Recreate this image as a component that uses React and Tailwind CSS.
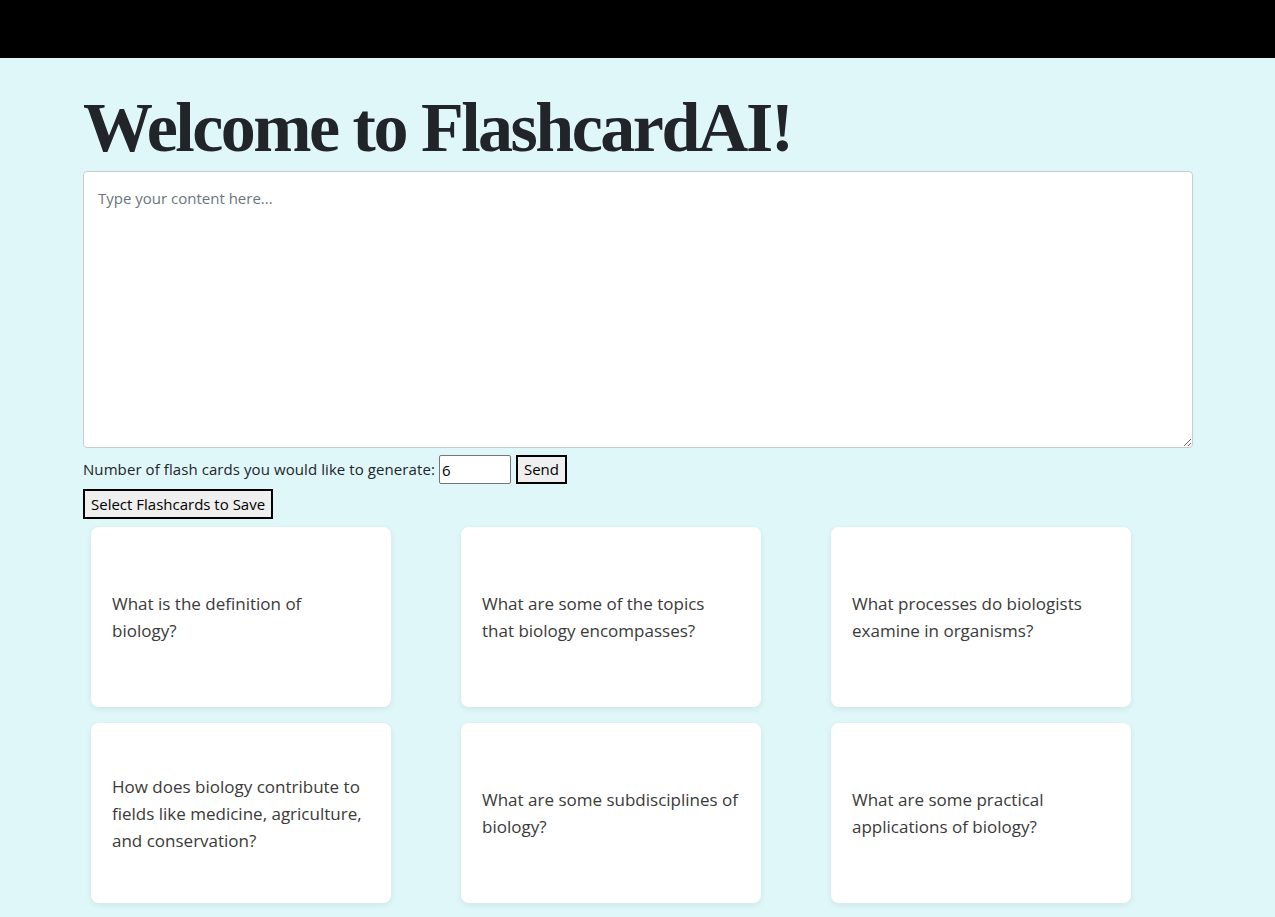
import React, { useState } from "react";

const cards = [
  ["What is the definition of", "biology?"],
  ["What are some of the topics", "that biology encompasses?"],
  ["What processes do biologists", "examine in organisms?"],
  ["How does biology contribute to", "fields like medicine, agriculture,", "and conservation?"],
  ["What are some subdisciplines of", "biology?"],
  ["What are some practical", "applications of biology?"],
];

export default function App() {
  const [count, setCount] = useState("6");
  const [text, setText] = useState("");

  return (
    <div className="min-h-screen bg-[#e0f7fa] font-['Open_Sans',sans-serif] text-[#212529]">
      {/* Top bar */}
      <div className="h-[58px] bg-black" />

      <div className="w-[1110px] ml-[83px] pt-[30px]">
        <h1 className="font-['Liberation_Serif',serif] font-bold text-[70px] leading-[80px] tracking-[-2.5px] text-[#212529] mb-[3px] whitespace-nowrap">
          Welcome to FlashcardAI!
        </h1>

        {/* Content input */}
        <textarea
          value={text}
          onChange={(e) => setText(e.target.value)}
          placeholder="Type your content here..."
          className="block w-full h-[277px] bg-white border border-[#c8ccd0] rounded-[4px] px-[14px] py-[15px] text-[15px] leading-[22px] placeholder:text-[#6c757d] focus:outline-none"
        />

        {/* Count + send */}
        <div className="flex items-center mt-[7px] text-[15px]">
          <span className="tracking-[0.08px]">Number of flash cards you would like to generate:</span>
          <input
            type="number"
            value={count}
            onChange={(e) => setCount(e.target.value)}
            className="ml-[4px] w-[72px] h-[29px] bg-white border border-[#767676] rounded-[2px] px-[2px] text-[15px] text-black focus:outline-none [appearance:textfield]"
          />
          <button className="ml-[5px] h-[29px] px-[6px] bg-[#efefef] border-2 border-black text-[15px] text-black">
            Send
          </button>
        </div>

        <button className="mt-[5px] h-[30px] px-[6px] bg-[#efefef] border-2 border-black text-[15px] text-black">
          Select Flashcards to Save
        </button>

        {/* Flashcards */}
        <div className="grid grid-cols-3 w-[1110px]">
          {cards.map((lines, i) => (
            <div key={i} className="p-[8px]">
              <div className="w-[300px] h-[180px] bg-white rounded-[8px] shadow-[0_2px_6px_rgba(0,0,0,0.08)] flex items-center px-[21px]">
                <p className="text-[17px] leading-[27px] text-[#3a3a3a] whitespace-nowrap">
                  {lines.map((l, j) => (
                    <span key={j} className="block">{l}</span>
                  ))}
                </p>
              </div>
            </div>
          ))}
        </div>
      </div>
    </div>
  );
}
